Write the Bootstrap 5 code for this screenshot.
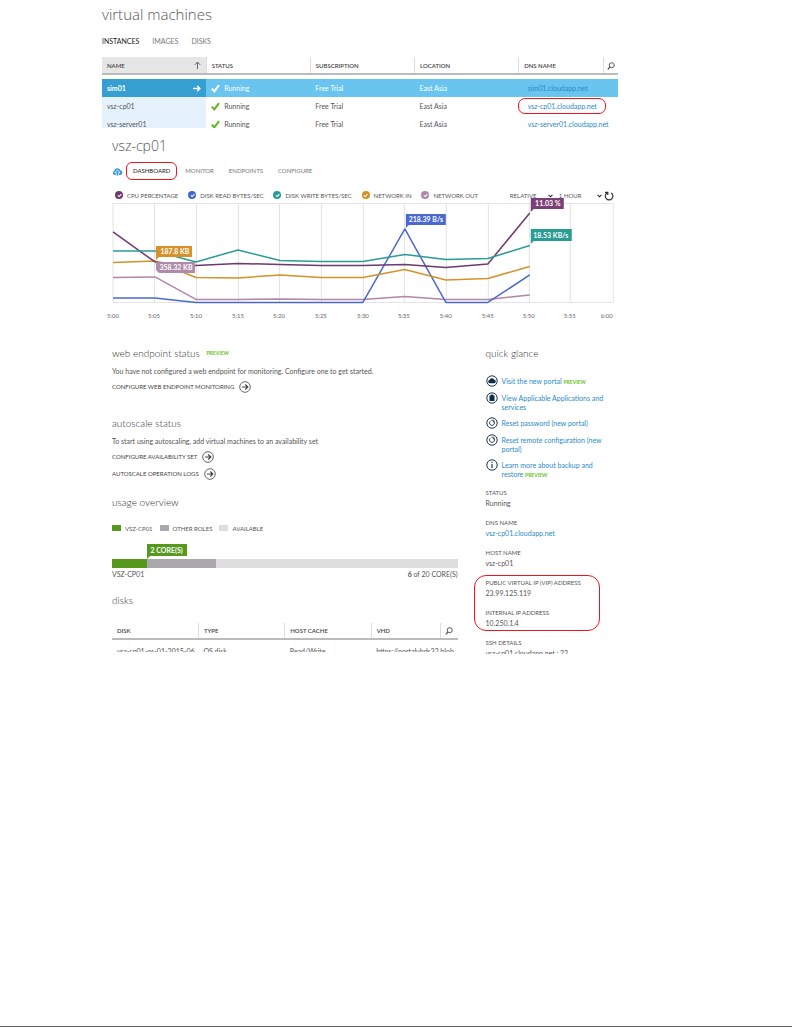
<!DOCTYPE html>
<html lang="en">
<head>
<meta charset="utf-8">
<meta name="viewport" content="width=device-width, initial-scale=1">
<title>Virtual machines</title>
<link href="https://cdn.jsdelivr.net/npm/bootstrap@5.3.0/dist/css/bootstrap.min.css" rel="stylesheet">
<script src="https://cdn.jsdelivr.net/npm/bootstrap@5.3.0/dist/js/bootstrap.bundle.min.js" defer></script>
<style>
body{font:7px/9px Lato,sans-serif;color:#555;background:#fff;border-bottom:1px solid #666}
a{color:#2a8ac8;text-decoration:none}
svg{flex:none}
/* page frame */
.portal{padding:4px 22% 0 102px}
.detail{padding:8px 4px 0 10px}
.cols{display:grid;grid-template-columns:345fr 128fr;column-gap:28px;margin-top:24px}
h1,h2{font:300 15px/20px "Open Sans",sans-serif;margin:0;color:#555}
h2{font-size:14px}
h3{font:300 10px/16px Lato,sans-serif;margin:0;color:#333}
.caps{font-size:6px;line-height:9px}
/* tabs */
.tabs{column-gap:15px}
.tabs .nav-link{padding:0;color:#777;font-size:6px;line-height:10px}
.tabs .nav-link.active{color:#222}
.tabs-main{margin-top:12px;column-gap:13px}
.tabs-main .nav-link{font-size:7px}
.detail-tabs{margin-top:10px;column-gap:10px}
.ringed{position:relative}
.ringed::after{content:"";position:absolute;border:1px solid #f0141e;border-radius:6px;inset:-4px -7px;pointer-events:none}
.ring-dns::after{inset:-4px -9px -4px -10px;border-radius:7px}
.ring-ip::after{inset:-3px 14px -3px -12px;border-radius:12px}
/* instance and disk lists */
.grid-list{table-layout:fixed;width:100%;margin:0}
.grid-list th{height:16px;padding:0 5px;font-weight:600;font-size:6px;color:#444;border-left:1px solid #ddd;vertical-align:middle;white-space:nowrap}
.grid-list th:first-child{border-left:0}
.grid-list th:last-child{padding:0;text-align:center}
.grid-list thead tr{border-bottom:2px solid #bbb}
.grid-list td{height:18px;padding:0 5px;vertical-align:middle;white-space:nowrap}
.grid-list .c-wide{width:20.2%}
.grid-list .c-dns{width:16.4%}
.grid-list .c-disk{width:25%}
.grid-list .c-vhd{width:20%}
.instances td:nth-child(5){padding-left:9px}
.instances th{height:17px}
.instances .sorted{background:#e6e6e6}
.instances td:first-child{background:#e5f2fe}
.instances .gap td{height:5px;background:none}
.instances .picked td{background:#69c5ef;color:#fff}
.instances .picked td:first-child{background:#349fd0;font-weight:700}
.disks td{height:22px;padding-top:7px;vertical-align:top}
.peek{overflow:hidden}
.instances-peek{max-height:71px;margin-top:11px}
.disks-peek{max-height:29px;margin-top:15px}
/* chart */
.legend{height:9px;margin-top:15px;padding-left:3px}
.legend label{display:flex;gap:4px;font-size:6px;line-height:9px;white-space:nowrap}
.dot.form-check-input{width:8px;height:8px;margin:0;border-radius:50%;border:0;background-color:var(--c);background-size:7px;box-shadow:none}
.pick-group{gap:6px;margin-left:22px}
.pick{width:43px;appearance:none;border:0;padding:0;color:#555;font:6px/9px Lato,sans-serif;background:url("data:image/svg+xml,%3Csvg xmlns='http://www.w3.org/2000/svg' viewBox='0 0 6 4'%3E%3Cpath d='M.7.7 3 3 5.3.7' fill='none' stroke='%23222' stroke-width='1.3'/%3E%3C/svg%3E") no-repeat right center/5px 4px}
.refresh{margin-left:-8px}
.plot{position:relative;display:block;width:100%;height:auto;overflow:visible;margin-top:3px}
.plot polyline{fill:none;stroke-width:1.5;stroke-linejoin:round}
.plot .tick{font:6px Lato,sans-serif;fill:#666;text-anchor:middle}
.plot .tip{font:700 7px Lato,sans-serif;fill:#fff;text-anchor:middle}
.preview-tag{display:inline-block;font:700 5px/6px Lato,sans-serif;color:#6cbf1e}
h3 .preview-tag{vertical-align:2px;margin-left:4px}
.icon-button{display:flex;align-items:center;gap:5px;padding:0;border:0;background:none;color:#444;font:6px/12px Lato,sans-serif}
.note{margin:6px 0 0}
.action{margin-top:5px}
.autoscale{margin-top:22px}
.usage-title{margin-top:14px}
.disks-title{margin-top:13px}
/* usage bar */
.keys{margin-top:14px;gap:7px}
.swatch{width:9px;height:6px}
.usage{height:9px;background:#dedede;position:relative;margin-top:26px}
.c-own{background:#57991c}
.c-other{background:#aaa8aa}
.c-free{background:#dedede}
.usage-labels{margin-top:2px}
.flag{position:absolute;bottom:12px;background:#57991c;color:#fff;font:700 7px/12px Lato,sans-serif;padding:0 4px}
.flag::after{content:"";position:absolute;left:0;top:12px;border-top:3px solid #57991c;border-right:3px solid transparent}
/* quick glance */
.glance{display:grid;row-gap:5px;margin:14px 0 0}
.glance li{display:flex;gap:4px}
.glance li>span{padding-top:2px}
.facts{margin:9px 0 0}
.facts dt{font-weight:400;font-size:6px;line-height:10px}
.facts dd{margin:0 0 10px;line-height:10px}
.ring-ip dd:last-child{margin:0}
.facts-peek{margin-top:10px;max-height:16px}
</style>
</head>
<body class="min-vh-100">
<svg width="0" height="0" class="position-absolute" aria-hidden="true">
<symbol id="go" viewBox="0 0 12 12"><circle cx="6" cy="6" r="5.3" fill="none" stroke="#666"/><path d="M3 6h5.6M6.3 3.5 8.8 6 6.3 8.5" fill="none" stroke="#444" stroke-width="1.2"/></symbol>
<symbol id="find" viewBox="0 0 8 8"><circle cx="4.7" cy="3.2" r="2.5" fill="none" stroke="#555"/><path d="M3 5 .8 7.4" stroke="#555" stroke-width="1.3"/></symbol>
<symbol id="tick" viewBox="0 0 9 9"><path d="M.8 4.6 3.3 7.4 8 1.2" fill="none" stroke="currentColor" stroke-width="2"/></symbol>
<symbol id="reset" viewBox="0 0 12 12"><circle cx="6" cy="6" r="5.2" fill="none" stroke="#1d3550"/><path d="M4.2 4.2A2.5 2.5 0 1 0 7.8 4.2M5.5 3.3H7.9v2.3" fill="none" stroke="#1d3550" stroke-width=".9"/></symbol>
</svg>
<main class="portal">
<h1>virtual machines</h1>
<nav class="nav tabs tabs-main">
<a class="nav-link active" href="#">INSTANCES</a><a class="nav-link" href="#">IMAGES</a><a class="nav-link" href="#">DISKS</a>
</nav>
<div class="peek instances-peek">
<table class="grid-list instances">
<colgroup><col class="c-wide"><col class="c-wide"><col class="c-wide"><col class="c-wide"><col class="c-dns"><col></colgroup>
<thead><tr>
<th class="sorted"><span class="d-flex justify-content-between align-items-center">NAME<svg width="7" height="8" viewBox="0 0 7 8"><path d="M3.5 8V1M.8 3.8 3.5 1l2.7 2.8" fill="none" stroke="#666"/></svg></span></th>
<th>STATUS</th><th>SUBSCRIPTION</th><th>LOCATION</th><th>DNS NAME</th>
<th><svg width="8" height="8"><use href="#find"/></svg></th></tr></thead>
<tbody>
<tr class="gap"><td colspan="6"></td></tr>
<tr class="picked"><td><span class="d-flex justify-content-between align-items-center">sim01<svg width="8" height="7" viewBox="0 0 8 7"><path d="M0 3.5h7M4.2.7 7 3.5 4.2 6.3" fill="none" stroke="#fff" stroke-width="1.3"/></svg></span></td>
<td><span class="d-flex align-items-center gap-1"><svg width="9" height="9"><use href="#tick"/></svg>Running</span></td><td>Free Trial</td><td>East Asia</td><td><a href="#">sim01.cloudapp.net</a></td><td></td></tr>
<tr><td>vsz-cp01</td>
<td><span class="d-flex align-items-center gap-1"><svg width="9" height="9" color="#62b51e"><use href="#tick"/></svg>Running</span></td><td>Free Trial</td><td>East Asia</td><td><a class="ringed ring-dns" href="#">vsz-cp01.cloudapp.net</a></td><td></td></tr>
<tr><td>vsz-server01</td>
<td><span class="d-flex align-items-center gap-1"><svg width="9" height="9" color="#62b51e"><use href="#tick"/></svg>Running</span></td><td>Free Trial</td><td>East Asia</td><td><a href="#">vsz-server01.cloudapp.net</a></td><td></td></tr>
</tbody></table>
</div>

<section class="detail">
<h2>vsz-cp01</h2>
<div class="d-flex align-items-center detail-tabs">
<svg width="11" height="9" viewBox="0 0 11 9"><path d="M2.5 8A2.2 2.2 0 0 1 2 3.9 3.4 3.4 0 0 1 8.4 3.3 2.4 2.4 0 0 1 8.6 8z" fill="#3a95d5"/><path d="M4.2 8.5V5.5H2.9L5.5 2.8 8 5.5H6.7v3" stroke="#fff" stroke-width=".8" fill="#3a95d5"/></svg>
<nav class="nav tabs"><a class="nav-link active ringed" href="#">DASHBOARD</a><a class="nav-link" href="#">MONITOR</a><a class="nav-link" href="#">ENDPOINTS</a><a class="nav-link" href="#">CONFIGURE</a></nav>
</div>

<form class="legend d-flex align-items-center justify-content-between">
<label><input class="form-check-input dot" style="--c:#6d3a6f" type="checkbox" checked>CPU PERCENTAGE</label>
<label><input class="form-check-input dot" style="--c:#4466cf" type="checkbox" checked>DISK READ BYTES/SEC</label>
<label><input class="form-check-input dot" style="--c:#2a9c94" type="checkbox" checked>DISK WRITE BYTES/SEC</label>
<label><input class="form-check-input dot" style="--c:#d6912a" type="checkbox" checked>NETWORK IN</label>
<label><input class="form-check-input dot" style="--c:#b187a9" type="checkbox" checked>NETWORK OUT</label>
<span class="d-flex align-items-center pick-group"><select class="pick" aria-label="Scale"><option>RELATIVE</option></select><select class="pick" aria-label="Period"><option>1 HOUR</option></select></span>
<button type="button" class="icon-button refresh" aria-label="Refresh"><svg width="10" height="10" viewBox="0 0 10 10"><path d="M3 2A3.8 3.8 0 1 0 7.2 2M1 1.3h2.8v2.8" fill="none" stroke="#333" stroke-width="1.2"/></svg></button>
</form>
<svg class="plot" viewBox="112 203 502 118" role="img" aria-label="Usage over the last hour">
<path d="M113 203.5H613.5V302.5H113zM154.5 203V303M196.5 203V303M238.5 203V303M279.5 203V303M321.5 203V303M363.5 203V303M404.5 203V303M446.5 203V303M488.5 203V303M529.5 203V303M570.5 203V303" fill="none" stroke="#e3e3e6"/>
<polyline stroke="#b187a9" points="113,277.5 155,277 196,299.5 238,299.5 280,299 321,299.5 363,299.5 405,296.5 446,299.5 488,299.5 530,295"/>
<polyline stroke="#4a69cf" points="113,298 155,298 196,302.5 363,302.5 405,229 446,302.5 488,302.5 530,275"/>
<polyline stroke="#d6912a" points="113,262.5 155,261 196,277.5 238,278 280,275 321,277.5 363,277.5 405,269.5 446,280 488,278.5 530,266.5"/>
<polyline stroke="#6d3a6f" points="113,232 155,262 196,265.5 238,263.5 280,264.5 321,265.5 363,265.5 405,264.5 446,267.5 488,264 530,213"/>
<polyline stroke="#2a9c94" points="113,251 155,251 196,262 238,250 280,260.5 321,261.5 363,261.5 405,254.5 446,259.5 488,258.5 530,245.5"/>
<path fill="#b08cab" d="M156 262h39v11h-36l-3-3z"/><path fill="#d6912a" d="M156 246h36v11h-33l-3 3z"/>
<path fill="#4a69cf" d="M406 214h40v11h-37l-3 3z"/><path fill="#7a3f76" d="M531 198h33v11h-30l-3 3z"/><path fill="#2a9c94" d="M531 229h41v12h-38l-3 3z"/>
<g class="tip"><text x="175" y="254">187.8 KB</text><text x="176" y="270">358.32 KB</text><text x="426" y="222">218.39 B/s</text><text x="548" y="206">11.03 %</text><text x="551" y="238">18.53 KB/s</text></g>
<g class="tick"><text x="113" y="318">5:00</text><text x="154" y="318">5:05</text><text x="196" y="318">5:10</text><text x="238" y="318">5:15</text><text x="279" y="318">5:20</text><text x="321" y="318">5:25</text><text x="363" y="318">5:30</text><text x="404" y="318">5:35</text><text x="446" y="318">5:40</text><text x="488" y="318">5:45</text><text x="529" y="318">5:50</text><text x="570" y="318">5:55</text><text x="607" y="318">6:00</text></g>
</svg>

<div class="cols">
<div>
<h3>web endpoint status <span class="preview-tag">PREVIEW</span></h3>
<p class="note">You have not configured a web endpoint for monitoring. Configure one to get started.</p>
<button type="button" class="icon-button action">CONFIGURE WEB ENDPOINT MONITORING<svg width="12" height="12"><use href="#go"/></svg></button>
<h3 class="autoscale">autoscale status</h3>
<p class="note">To start using autoscaling, add virtual machines to an availability set</p>
<button type="button" class="icon-button action">CONFIGURE AVAILABILITY SET<svg width="12" height="12"><use href="#go"/></svg></button>
<button type="button" class="icon-button action">AUTOSCALE OPERATION LOGS<svg width="12" height="12"><use href="#go"/></svg></button>
<h3 class="usage-title">usage overview</h3>
<div class="d-flex align-items-center caps keys">
<span class="d-flex align-items-center gap-1"><i class="swatch c-own"></i>VSZ-CP01</span>
<span class="d-flex align-items-center gap-1"><i class="swatch c-other"></i>OTHER ROLES</span>
<span class="d-flex align-items-center gap-1"><i class="swatch c-free"></i>AVAILABLE</span></div>
<div class="usage d-flex"><div class="c-own" style="width:10%"></div><div class="c-other" style="width:20%"></div><span class="flag" style="left:10%">2 CORE(S)</span></div>
<div class="d-flex justify-content-between usage-labels"><span>VSZ-CP01</span><span><b>6</b> of 20 CORE(S)</span></div>
<h3 class="disks-title">disks</h3>
<div class="peek disks-peek">
<table class="grid-list disks">
<colgroup><col class="c-disk"><col class="c-disk"><col class="c-disk"><col class="c-vhd"><col></colgroup>
<thead><tr><th>DISK</th><th>TYPE</th><th>HOST CACHE</th><th>VHD</th><th><svg width="8" height="8"><use href="#find"/></svg></th></tr></thead>
<tbody><tr><td>vsz-cp01-os-01-2015-06</td><td>OS disk</td><td>Read/Write</td><td colspan="2">https://portalvhds32.blob</td></tr></tbody></table></div>
</div>

<aside>
<h3>quick glance</h3>
<ul class="list-unstyled glance">
<li><svg width="12" height="12" viewBox="0 0 12 12"><circle cx="6" cy="6" r="5.2" fill="none" stroke="#1d3550"/><path d="M3.5 8.3a1.7 1.7 0 0 1 0-3.3A2.5 2.5 0 0 1 8 4.5a2 2 0 0 1 .6 3.8z" fill="#0d2c4b"/></svg><span><a href="#">Visit the new portal</a> <span class="preview-tag">PREVIEW</span></span></li>
<li><svg width="12" height="12" viewBox="0 0 12 12"><circle cx="6" cy="6" r="5.2" fill="none" stroke="#1d3550"/><path d="M3.5 3.5h5V9h-5zM4.8 2.5h2.4v1H4.8z" fill="#0d2c4b"/></svg><span><a href="#">View Applicable Applications and services</a></span></li>
<li><svg width="12" height="12"><use href="#reset"/></svg><span><a href="#">Reset password (new portal)</a></span></li>
<li><svg width="12" height="12"><use href="#reset"/></svg><span><a href="#">Reset remote configuration (new portal)</a></span></li>
<li><svg width="12" height="12" viewBox="0 0 12 12"><circle cx="6" cy="6" r="5.2" fill="none" stroke="#1d3550"/><path d="M6 5v4M6 2.7V4" stroke="#1d3550" stroke-width="1.2"/></svg><span><a href="#">Learn more about backup and restore</a> <span class="preview-tag">PREVIEW</span></span></li>
</ul>
<dl class="facts">
<dt>STATUS</dt><dd>Running</dd>
<dt>DNS NAME</dt><dd><a href="#">vsz-cp01.cloudapp.net</a></dd>
<dt>HOST NAME</dt><dd>vsz-cp01</dd>
<div class="ringed ring-ip"><dt>PUBLIC VIRTUAL IP (VIP) ADDRESS</dt><dd>23.99.125.119</dd>
<dt>INTERNAL IP ADDRESS</dt><dd>10.250.1.4</dd></div>
<div class="peek facts-peek"><dt>SSH DETAILS</dt><dd>vsz-cp01.cloudapp.net : 22</dd></div>
</dl>
</aside>
</div>
</section>
</main>
</body>
</html>
